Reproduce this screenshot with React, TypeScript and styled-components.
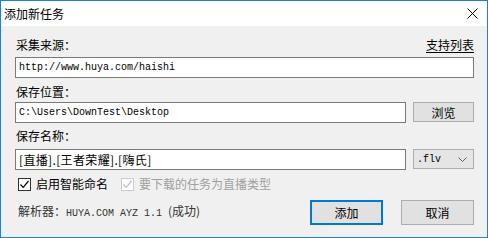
import styled, { createGlobalStyle } from 'styled-components';

const GlobalStyle = createGlobalStyle`
  html, body {
    margin: 0;
    padding: 0;
    background: #f0f0f0;
  }
  * {
    box-sizing: border-box;
  }
`;

const cjk = `"Noto Sans CJK SC", "Noto Sans", sans-serif`;
const mono = `"Liberation Mono", "Noto Sans CJK SC", monospace`;

const Window = styled.div`
  width: 488px;
  height: 238px;
  border: 1px solid #1883d7;
  background: #f0f0f0;
  display: flex;
  flex-direction: column;
  font-family: ${cjk};
  font-size: 12px;
  color: #000;
`;

const TitleBar = styled.div`
  height: 25px;
  background: #fff;
  display: flex;
  align-items: center;
  justify-content: space-between;
  padding: 0 9px 0 3px;
`;

const Title = styled.span`
  font-size: 12px;
  line-height: 16px;
`;

const CloseIcon = () => (
  <svg width="11" height="11" viewBox="0 0 11 11">
    <path d="M0.5 0.5 L10.5 10.5 M10.5 0.5 L0.5 10.5" stroke="#000" strokeWidth="1" />
  </svg>
);

const Body = styled.div`
  flex: 1;
  padding: 11px 13px 0 14px;
  display: flex;
  flex-direction: column;
`;

const LabelRow = styled.div<{ mt: number }>`
  display: flex;
  justify-content: space-between;
  align-items: center;
  height: 16px;
  line-height: 16px;
  margin-top: ${({ mt }) => mt}px;
  padding-left: 1px;
`;

const Link = styled.span`
  text-decoration: underline;
  text-underline-offset: 2px;
`;

const Field = styled.div<{ mt: number }>`
  display: flex;
  gap: 7px;
  margin-top: ${({ mt }) => mt}px;
`;

const TextBox = styled.div<{ font?: 'mono' | 'cjk' }>`
  flex: 1;
  height: 21px;
  background: #fff;
  border: 1px solid #7a7a7a;
  padding: 0 3px;
  display: flex;
  align-items: center;
  font-family: ${({ font }) => (font === 'cjk' ? cjk : mono)};
  font-size: ${({ font }) => (font === 'cjk' ? '12px' : '10px')};
  letter-spacing: ${({ font }) => (font === 'cjk' ? '0.35px' : '0')};
  white-space: nowrap;
`;

const Button = styled.div<{ w: number; h: number; primary?: boolean }>`
  width: ${({ w }) => w}px;
  height: ${({ h }) => h}px;
  background: #e1e1e1;
  border: ${({ primary }) => (primary ? '2px solid #0078d7' : '1px solid #adadad')};
  display: flex;
  align-items: center;
  justify-content: center;
  font-size: 12px;
`;

const Select = styled.div`
  width: 61px;
  height: 20px;
  background: #e5e5e5;
  border: 1px solid #adadad;
  display: flex;
  align-items: center;
  justify-content: space-between;
  padding: 0 6px 0 3px;
  font-family: ${mono};
  font-size: 10px;
`;

const Chevron = () => (
  <svg width="9" height="5" viewBox="0 0 9 5">
    <path d="M0.5 0.5 L4.5 4.5 L8.5 0.5" stroke="#606060" fill="none" strokeWidth="1" />
  </svg>
);

const CheckRow = styled.div`
  display: flex;
  align-items: center;
  margin-top: 7px;
  padding-left: 3px;
  height: 14px;
`;

const CheckItem = styled.label<{ disabled?: boolean }>`
  display: flex;
  align-items: center;
  gap: 5px;
  margin-right: 13px;
  color: ${({ disabled }) => (disabled ? '#a0a0a0' : '#000')};
  line-height: 16px;
`;

const Box = styled.span<{ disabled?: boolean }>`
  width: 13px;
  height: 13px;
  background: #fff;
  border: 1px solid ${({ disabled }) => (disabled ? '#cccccc' : '#333333')};
  display: flex;
  align-items: center;
  justify-content: center;
`;

const Tick = ({ color }: { color: string }) => (
  <svg width="11" height="11" viewBox="0 0 11 11">
    <path d="M1.5 5.5 L4.2 8.3 L9.5 2" stroke={color} fill="none" strokeWidth="1.2" />
  </svg>
);

const Footer = styled.div`
  display: flex;
  align-items: center;
  margin-top: 9px;
  gap: 18px;
`;

const Parser = styled.div`
  flex: 1;
  padding-left: 3px;
  color: #333;
  line-height: 16px;
`;

const Mono = styled.span`
  font-family: ${mono};
  font-size: 10px;
  margin-right: 6px;
`;

export default function App() {
  return (
    <>
      <GlobalStyle />
      <Window>
        <TitleBar>
          <Title>添加新任务</Title>
          <CloseIcon />
        </TitleBar>
        <Body>
          <LabelRow mt={0}>
            <span>采集来源：</span>
            <Link>支持列表</Link>
          </LabelRow>
          <Field mt={4}>
            <TextBox>http://www.huya.com/haishi</TextBox>
          </Field>
          <LabelRow mt={6}>
            <span>保存位置：</span>
          </LabelRow>
          <Field mt={2}>
            <TextBox>C:\Users\DownTest\Desktop</TextBox>
            <Button w={61} h={20}>浏览</Button>
          </Field>
          <LabelRow mt={5}>
            <span>保存名称：</span>
          </LabelRow>
          <Field mt={5}>
            <TextBox font="cjk">[直播].[王者荣耀].[嗨氏]</TextBox>
            <Select>
              <span>.flv</span>
              <Chevron />
            </Select>
          </Field>
          <CheckRow>
            <CheckItem>
              <Box>
                <Tick color="#000" />
              </Box>
              启用智能命名
            </CheckItem>
            <CheckItem disabled>
              <Box disabled>
                <Tick color="#c0c0c0" />
              </Box>
              要下载的任务为直播类型
            </CheckItem>
          </CheckRow>
          <Footer>
            <Parser>
              解析器：<Mono>HUYA.COM AYZ 1.1</Mono>(成功)
            </Parser>
            <Button w={73} h={25} primary>添加</Button>
            <Button w={73} h={25}>取消</Button>
          </Footer>
        </Body>
      </Window>
    </>
  );
}
